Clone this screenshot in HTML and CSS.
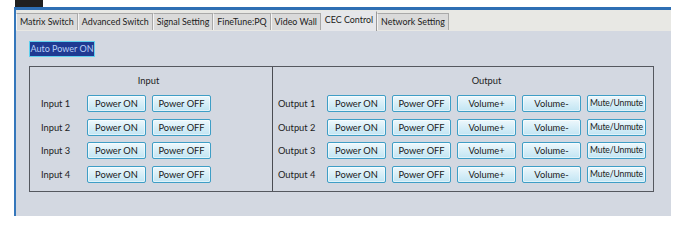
FILE: index.html
```html
<!DOCTYPE html>
<html>
<head>
<meta charset="utf-8">
<link rel="stylesheet" href="styles.css">
</head>
<body>
<div class="frame">
  <div class="topline"><div class="stub"></div></div>
  <div class="window">
    <div class="tabs">
      <div class="tab">Matrix Switch</div>
      <div class="tab">Advanced Switch</div>
      <div class="tab">Signal Setting</div>
      <div class="tab">FineTune:PQ</div>
      <div class="tab">Video Wall</div>
      <div class="tab active">CEC Control</div>
      <div class="tab">Network Setting</div>
    </div>
    <div class="content">
      <div class="auto">Auto Power ON</div>
      <div class="group">
        <div class="section input">
          <div class="title">Input</div>
          <div class="row"><span class="label">Input 1</span><span class="btn">Power ON</span><span class="btn">Power OFF</span></div>
          <div class="row"><span class="label">Input 2</span><span class="btn">Power ON</span><span class="btn">Power OFF</span></div>
          <div class="row"><span class="label">Input 3</span><span class="btn">Power ON</span><span class="btn">Power OFF</span></div>
          <div class="row"><span class="label">Input 4</span><span class="btn">Power ON</span><span class="btn">Power OFF</span></div>
        </div>
        <div class="section output">
          <div class="title">Output</div>
          <div class="row"><span class="label">Output 1</span><span class="btn">Power ON</span><span class="btn">Power OFF</span><span class="btn">Volume+</span><span class="btn">Volume-</span><span class="btn mute">Mute/Unmute</span></div>
          <div class="row"><span class="label">Output 2</span><span class="btn">Power ON</span><span class="btn">Power OFF</span><span class="btn">Volume+</span><span class="btn">Volume-</span><span class="btn mute">Mute/Unmute</span></div>
          <div class="row"><span class="label">Output 3</span><span class="btn">Power ON</span><span class="btn">Power OFF</span><span class="btn">Volume+</span><span class="btn">Volume-</span><span class="btn mute">Mute/Unmute</span></div>
          <div class="row"><span class="label">Output 4</span><span class="btn">Power ON</span><span class="btn">Power OFF</span><span class="btn">Volume+</span><span class="btn">Volume-</span><span class="btn mute">Mute/Unmute</span></div>
        </div>
      </div>
    </div>
  </div>
</div>
</body>
</html>
```
FILE: styles.css
```css
html, body {
  margin: 0;
  padding: 0;
  background: #ffffff;
}
body {
  font-family: Lato, "Liberation Sans", Arial, sans-serif;
  font-size: 9.3px;
  color: #1c1c1c;
}
.frame {
  margin-left: 14px;
  width: 657px;
}
.topline {
  height: 7px;
}
.stub {
  width: 28px;
  height: 7px;
  margin-left: 1px;
  background: #202020;
}
.window {
  border-top: 3px solid #2e6fb4;
  border-left: 2px solid #3577bb;
  height: 206px;
  background: #d3d8e1;
  display: flex;
  flex-direction: column;
}
.tabs {
  height: 21px;
  background: #e8e8e4;
  display: flex;
  align-items: flex-end;
  padding-bottom: 1px;
  box-sizing: border-box;
}
.tab {
  height: 17px;
  line-height: 16px;
  padding: 0 3px;
  box-sizing: border-box;
  background: #dadada;
  border: 1px solid #a9a9a9;
  border-left-color: #f4f4f4;
  border-bottom: none;
  white-space: nowrap;
  color: #202020;
  font-size: 8.9px;
}
.tab.active {
  height: 20px;
  line-height: 15px;
  background: #e6e7ea;
  border-color: #e6e7ea;
  border-right-color: #9a9a9a;
  margin-bottom: -1px;
}
.content {
  flex: 1;
  padding: 10px 0 0 13px;
}
.auto {
  display: inline-block;
  width: 66px;
  height: 16px;
  line-height: 14px;
  text-align: center;
  white-space: nowrap;
  box-sizing: border-box;
  background: #1f3a92;
  color: #b9cff7;
  border: 1px solid #5fd0ee;
  font-size: 9px;
  vertical-align: top;
}
.group {
  margin-top: 9px;
  width: 625px;
  height: 126px;
  box-sizing: border-box;
  border: 1px solid #55585f;
  display: flex;
}
.section {
  display: flex;
  flex-direction: column;
  gap: 6.7px;
  padding-top: 8px;
}
.input {
  width: 243px;
  border-right: 1px solid #4a4c52;
  padding-left: 11px;
  box-sizing: border-box;
}
.output {
  flex: 1;
  padding-left: 5px;
}
.title {
  height: 12px;
  line-height: 12px;
  text-align: center;
  margin-bottom: 1.3px;
}
.input .title {
  padding-right: 16px;
}
.output .title {
  padding-left: 42px;
}
.row {
  display: flex;
  align-items: center;
  gap: 6px;
  height: 17px;
}
.label {
  white-space: nowrap;
}
.input .label {
  width: 40px;
}
.output .label {
  width: 43px;
}
.btn {
  width: 59px;
  height: 17px;
  box-sizing: border-box;
  border: 1px solid #3e9ec6;
  border-radius: 2px;
  background: linear-gradient(#eef8fc 0%, #d9eff8 45%, #c2e5f3 100%);
  box-shadow: inset 0 0 0 1px rgba(255,255,255,0.5);
  text-align: center;
  line-height: 15px;
  white-space: nowrap;
  color: #1a1a1a;
}
.btn.mute {
  font-size: 8.6px;
  letter-spacing: -0.15px;
}
```
